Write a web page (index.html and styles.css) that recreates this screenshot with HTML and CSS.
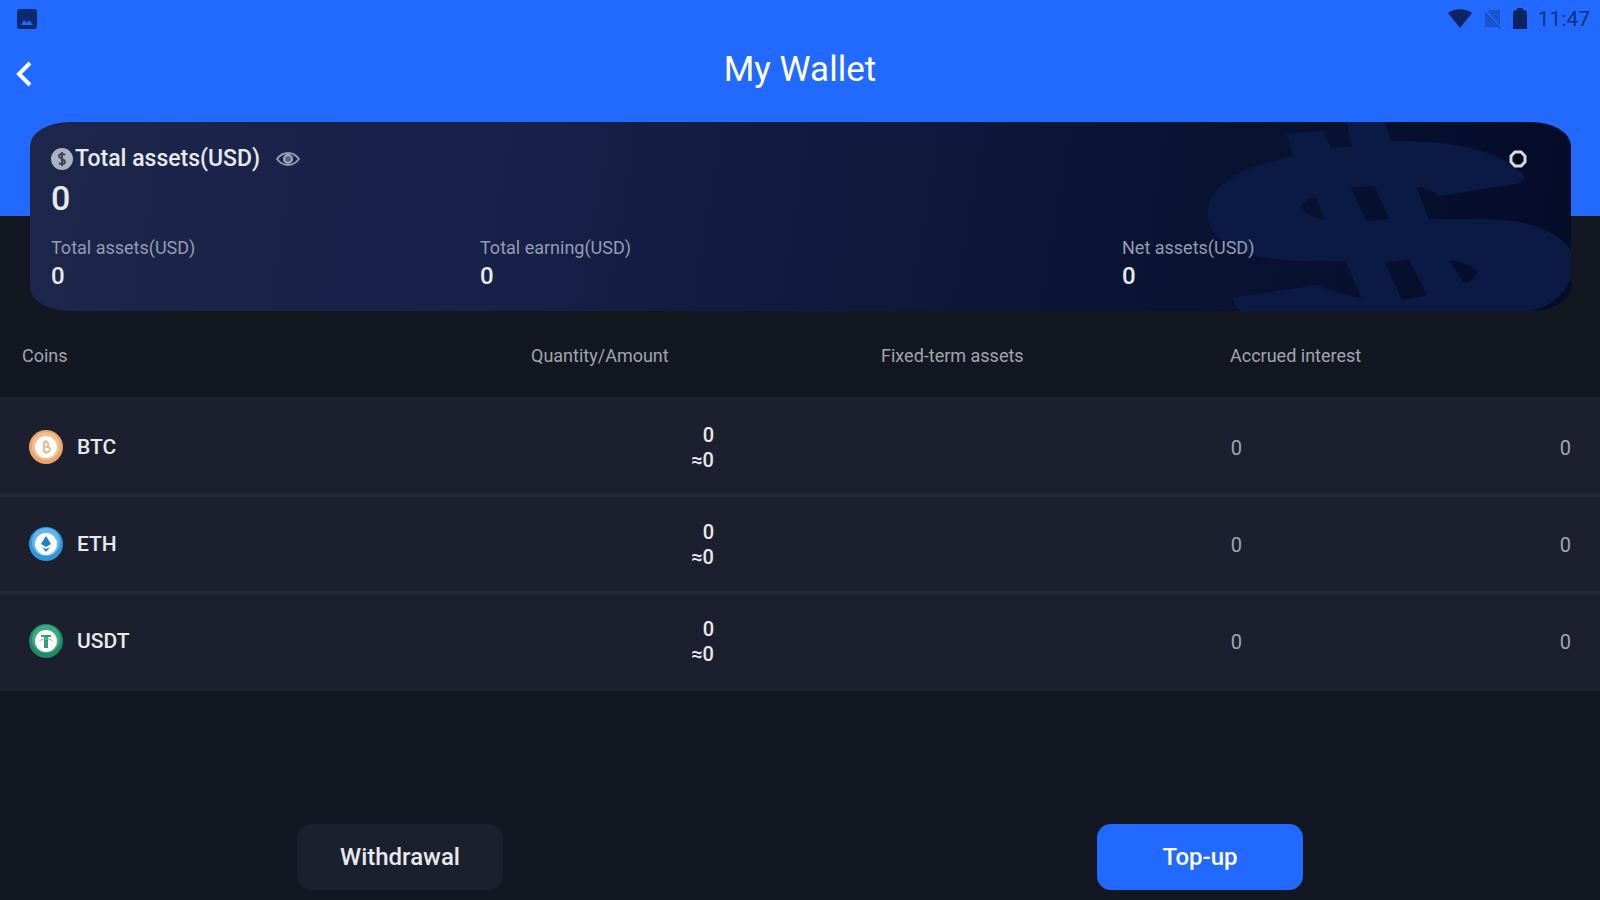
FILE: index.html
```html
<!DOCTYPE html>
<html lang="en">

<head>
    <meta charset="utf-8">
    <title>My Wallet</title>
    <link rel="stylesheet" href="styles.css">
</head>

<body>
    <header class="top">
        <div class="statusBar">
            <svg viewBox="0 0 20 20" width="20" height="20">
                <path fill="#0c2a6c" fill-rule="evenodd" d="M3 0h14a3 3 0 0 1 3 3v14a3 3 0 0 1-3 3H3a3 3 0 0 1-3-3V3a3 3 0 0 1 3-3zM4 16h12l-4-5-2 3-3-3z" />
            </svg>
            <div class="statusRight">
                <svg viewBox="0 0 26 20" width="26" height="20">
                    <path fill="#0c2560" d="M1 4C8-1 18-1 25 4L13 19z" />
                </svg>
                <svg viewBox="0 0 18 20" width="18" height="20">
                    <path fill="#1746a8" opacity=".6" d="M5 1h11v17H1V5z" />
                    <path stroke="#226aff" stroke-width="2" d="M2 2l13 15" />
                    <path stroke="#1746a8" stroke-width="1" d="M1 3l16 17" />
                </svg>
                <svg viewBox="0 0 14 22" width="14" height="22">
                    <path fill="#0c2560" d="M4 0h6v2h2l2 2v17H0V4l2-2h2z" />
                </svg>
                <span class="clock">11:47</span>
            </div>
        </div>
        <div class="titleBar">
            <button class="backButton" aria-label="Back">
                <svg viewBox="0 0 18 26" width="18" height="26">
                    <path fill="none" stroke="#fff" stroke-width="4" d="M15 2L4 13l11 11" />
                </svg>
            </button>
            <h1>My Wallet</h1>
        </div>
    </header>

    <main>
        <section class="card">
            <svg class="cardArt" viewBox="0 36 1233 564">
                <path fill="#0a1a45" fill-rule="evenodd" d="M383 72L495 62L515 112L578 108L563 36H675L695 93L760 94C900 95 1040 130 1095 200Q1095 218 1060 222L840 257Q810 235 770 228L808 325H960C1120 325 1200 370 1233 420V500C1210 560 1160 590 1110 600H250Q222 580 225 560L480 522Q530 550 608 562L560 452L400 450C260 440 148 400 148 310C148 220 270 160 405 140Z
                    M575 232L645 226L690 325L622 332Z
                    M425 290Q440 262 472 262L495 328Q450 320 425 290Z
                    M678 455L750 447L802 552L728 568Z
                    M870 450Q930 455 952 485Q940 515 912 515Z" />
            </svg>
            <div class="cardHead">
                <svg viewBox="0 0 22 22" width="22" height="22">
                    <circle cx="11" cy="11" r="11" fill="#adb2c0" />
                    <path fill="none" stroke="#3a4362" stroke-width="2" d="M14 7c-2-2-6-1-6 1 0 3 6 3 6 6 0 2-4 3-6 1M11 4v14" />
                </svg>
                <h2>Total assets(USD)</h2>
                <button class="eyeButton" aria-label="Hide amounts">
                    <svg viewBox="0 0 24 16" width="24" height="16">
                        <path fill="none" stroke="#9299ad" stroke-width="2" d="M1 8C7 0 17 0 23 8C17 16 7 16 1 8z" />
                        <circle cx="12" cy="8" r="4" fill="#5d6684" stroke="#a4aabb" stroke-width="2" />
                    </svg>
                </button>
                <button class="recordButton" aria-label="Records">
                    <svg viewBox="0 0 18 18" width="18" height="18">
                        <path fill="#02071a" stroke="#d9dbe0" stroke-width="3" d="M6 2h6l4 4v6l-4 4H6l-4-4V6z" />
                    </svg>
                </button>
            </div>
            <div class="total">0</div>
            <dl class="stats">
                <div>
                    <dt>Total assets(USD)</dt>
                    <dd>0</dd>
                </div>
                <div>
                    <dt>Total earning(USD)</dt>
                    <dd>0</dd>
                </div>
                <div>
                    <dt>Net assets(USD)</dt>
                    <dd>0</dd>
                </div>
            </dl>
        </section>

        <table class="coins">
            <thead>
                <tr>
                    <th>Coins</th>
                    <th>Quantity/Amount</th>
                    <th>Fixed-term assets</th>
                    <th>Accrued interest</th>
                </tr>
            </thead>
            <tbody>
                <tr>
                    <td class="coin">
                        <svg viewBox="0 0 34 34" width="34" height="34">
                            <circle cx="17" cy="17" r="17" fill="#eba56c" />
                            <circle cx="17" cy="16" r="14" fill="#f3bd90" />
                            <circle cx="17" cy="17" r="11" fill="#fff" />
                            <path fill="none" stroke="#eebb98" stroke-width="2" d="M15 12v10h3c4 0 4-5 0-5h-3 2c3 0 3-5 0-5zM17 10v2M17 22v2" />
                        </svg>
                        <span>BTC</span>
                    </td>
                    <td class="amount">0<br>≈0</td>
                    <td>0</td>
                    <td>0</td>
                </tr>
                <tr>
                    <td class="coin">
                        <svg viewBox="0 0 34 34" width="34" height="34">
                            <circle cx="17" cy="17" r="17" fill="#2f96dc" />
                            <circle cx="17" cy="15" r="14" fill="#62b8ec" />
                            <circle cx="17" cy="17" r="11" fill="#fff" />
                            <path fill="#1c7fcf" d="M17 9l5 8-5 3-5-3zM13 20l4 5 4-5-4 2z" />
                        </svg>
                        <span>ETH</span>
                    </td>
                    <td class="amount">0<br>≈0</td>
                    <td>0</td>
                    <td>0</td>
                </tr>
                <tr>
                    <td class="coin">
                        <svg viewBox="0 0 34 34" width="34" height="34">
                            <circle cx="17" cy="17" r="17" fill="#1f8a63" />
                            <circle cx="17" cy="15" r="14" fill="#3fa983" />
                            <circle cx="17" cy="17" r="11" fill="#fff" />
                            <path fill="#3b9b7a" d="M12 11h10v2h-3v11h-4V13h-3z" />
                            <path fill="none" stroke="#7dbfa6" stroke-width="1" d="M11 17c0-3 12-3 12 0" />
                        </svg>
                        <span>USDT</span>
                    </td>
                    <td class="amount">0<br>≈0</td>
                    <td>0</td>
                    <td>0</td>
                </tr>
            </tbody>
        </table>
    </main>

    <footer class="actions">
        <button class="action">Withdrawal</button>
        <button class="action primary">Top-up</button>
    </footer>
</body>

</html>
```
FILE: styles.css
```css
* {
    box-sizing: border-box;
}
body {
    margin: 0;
    min-height: 100vh;
    display: flex;
    flex-direction: column;
    background-color: #131722;
    color: #e8e9ec;
    font-family: Roboto, "Liberation Sans", sans-serif;
}
button {
    border: 0;
    padding: 0;
    background: none;
    color: inherit;
    font-family: inherit;
    cursor: pointer;
}
svg {
    display: block;
    flex: none;
}
.top {
    height: 216px;
    background-color: #226aff;
}
.statusBar {
    display: flex;
    justify-content: space-between;
    align-items: center;
    height: 37px;
    padding: 0 10px 0 17px;
}
.statusRight {
    display: flex;
    align-items: center;
    gap: 11px;
}
.clock {
    color: #0f2f7a;
    font-size: 21px;
    line-height: 24px;
}
.titleBar {
    display: grid;
    grid-template-columns: 60px 1fr 60px;
    align-items: center;
    height: 66px;
}
.backButton {
    width: 34px;
    padding: 8px 0 0 15px;
}
h1 {
    margin: 0;
    color: #fff;
    font-size: 35px;
    font-weight: 400;
    line-height: 40px;
    text-align: center;
}
.card {
    position: relative;
    overflow: hidden;
    height: 189px;
    margin: -94px 29px 0 30px;
    padding: 23px 20px 0 21px;
    border-radius: 40px / 24px;
    background: linear-gradient(100deg, #1d274b 0%, #17214a 30%, #0b1535 68%, #040c28 100%);
}
.cardArt {
    position: absolute;
    top: 0;
    right: 0;
    height: 189px;
}
.cardHead,
.total,
.stats {
    position: relative;
}
.cardHead {
    display: flex;
    align-items: center;
    height: 28px;
}
h2 {
    margin: 0 16px 0 2px;
    font-size: 23px;
    font-weight: 500;
    line-height: 28px;
}
.recordButton {
    margin: 0 24px 0 auto;
}
.total {
    font-size: 34px;
    font-weight: 500;
    line-height: 50px;
}
.stats {
    display: grid;
    grid-template-columns: 429fr 642fr 429fr;
    margin: 12px 0 0;
}
dt {
    color: #959cb0;
    font-size: 18px;
    line-height: 26px;
}
dd {
    margin: 0;
    font-size: 24px;
    font-weight: 500;
    line-height: 30px;
}
.coins,
.coins thead,
.coins tbody {
    display: block;
}
.coins tr {
    display: grid;
    align-items: center;
}
.coins thead tr {
    grid-template-columns: 509fr 350fr 349fr 370fr;
    height: 86px;
    padding: 4px 0 0 22px;
}
th {
    padding: 0;
    color: #a3a5ab;
    font-size: 18px;
    font-weight: 400;
    line-height: 24px;
    text-align: left;
}
.coins tbody {
    padding-top: 3px;
    background-color: #1c202e;
}
/* amounts are right aligned, so the rows have column stops of their own */
.coins tbody tr {
    grid-template-columns: 500fr 185fr 528fr 329fr;
    height: 97px;
    padding: 0 29px;
    border-bottom: 3px solid #242937;
}
.coins tbody tr:last-child {
    border-bottom-color: #1c202e;
}
td {
    padding: 2px 0 0;
    color: #a3a5ab;
    font-size: 20px;
    line-height: 25px;
    text-align: right;
}
.coin {
    display: flex;
    align-items: center;
    gap: 14px;
    padding: 0;
    color: #e8e9ec;
    font-size: 21px;
    font-weight: 500;
}
.amount {
    color: #e8e9ec;
    font-weight: 500;
}
.actions {
    display: flex;
    justify-content: space-around;
    margin-top: auto;
    padding: 24px 0 10px;
}
.action {
    width: 206px;
    height: 66px;
    border-radius: 14px;
    background-color: #1c202e;
    font-size: 24px;
    font-weight: 500;
}
.primary {
    background-color: #226aff;
    color: #fff;
}
```
